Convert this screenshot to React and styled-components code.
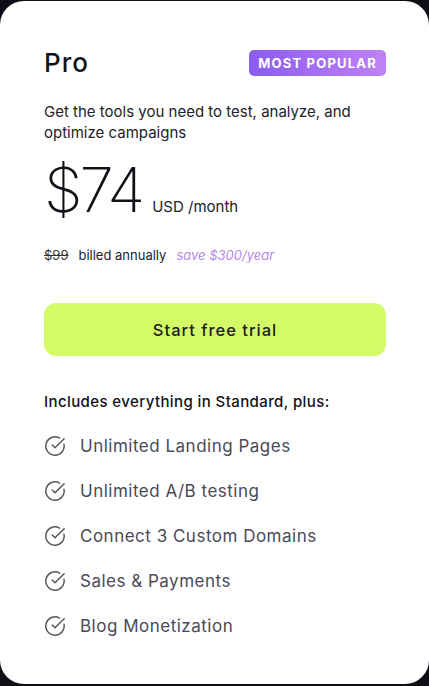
import React from 'react';
import styled, { createGlobalStyle } from 'styled-components';
import { CircleCheckBig } from 'lucide-react';

const Global = createGlobalStyle`
    html, body {
        margin: 0;
        padding: 0;
        background: #0e0e16;
    }
    body {
        font-family: Inter, "Noto Sans", sans-serif;
    }
`;

const Page = styled.div`
    width: 429px;
    height: 686px;
    padding: 1px 0 2px;
    box-sizing: border-box;
    background: #0e0e16;
`;

const Card = styled.div`
    height: 100%;
    box-sizing: border-box;
    background: #ffffff;
    border-radius: 24px;
    padding: 46px 43px 0 44px;
    display: flex;
    flex-direction: column;
`;

const Header = styled.div`
    display: flex;
    justify-content: space-between;
    align-items: center;
`;

const Title = styled.h2`
    margin: 0;
    font-size: 26px;
    font-weight: 500;
    color: #111118;
    letter-spacing: 1px;
`;

const Badge = styled.span`
    padding: 5px 9px;
    border-radius: 5px;
    background: linear-gradient(90deg, #8a5cf0 0%, #c181f5 100%);
    color: #fff;
    font-size: 13px;
    font-weight: 700;
    letter-spacing: 1.2px;
`;

const Desc = styled.p`
    margin: 23px 0 0;
    font-size: 15px;
    line-height: 21px;
    color: #222228;
`;

const PriceRow = styled.div`
    display: flex;
    align-items: baseline;
    gap: 10px;
    margin-top: 8px;
`;

const Amount = styled.span`
    font-size: 62px;
    font-weight: 200;
    color: #111118;
    letter-spacing: -3px;
    line-height: 78px;
`;

const Unit = styled.span`
    font-size: 15px;
    color: #222228;
`;

const Billing = styled.div`
    display: flex;
    align-items: baseline;
    gap: 10px;
    margin-top: 18px;
    font-size: 13px;
    color: #222228;
`;

const Old = styled.span`
    text-decoration: line-through;
    color: #333;
`;

const Save = styled.span`
    font-style: italic;
    color: #b58ae6;
`;

const CTA = styled.button`
    margin-top: 40px;
    height: 53px;
    width: 100%;
    border: none;
    border-radius: 12px;
    background: #d3fc68;
    color: #1d1d22;
    font-family: inherit;
    font-size: 16.5px;
    font-weight: 500;
    letter-spacing: 1px;
`;

const Includes = styled.div`
    margin-top: 36px;
    font-size: 15px;
    font-weight: 500;
    color: #111118;
    letter-spacing: 0.4px;
`;

const List = styled.ul`
    list-style: none;
    margin: 24px 0 0;
    padding: 0;
    display: flex;
    flex-direction: column;
    gap: 23px;
`;

const Item = styled.li`
    display: flex;
    align-items: center;
    gap: 14px;
    height: 22px;
    font-size: 17px;
    color: #4a4a58;
    letter-spacing: 0.5px;
`;

const features = [
    'Unlimited Landing Pages',
    'Unlimited A/B testing',
    'Connect 3 Custom Domains',
    'Sales & Payments',
    'Blog Monetization',
];

export default function App(){
    return(
        <Page>
            <Global />
            <Card>
                <Header>
                    <Title>Pro</Title>
                    <Badge>MOST POPULAR</Badge>
                </Header>
                <Desc>Get the tools you need to test, analyze, and optimize campaigns</Desc>
                <PriceRow>
                    <Amount>$74</Amount>
                    <Unit>USD /month</Unit>
                </PriceRow>
                <Billing>
                    <Old>$99</Old>
                    <span>billed annually</span>
                    <Save>save $300/year</Save>
                </Billing>
                <CTA>Start free trial</CTA>
                <Includes>Includes everything in Standard, plus:</Includes>
                <List>
                    {features.map(f => (
                        <Item key={f}>
                            <CircleCheckBig size={22} strokeWidth={1.6} color="#55555f" />
                            {f}
                        </Item>
                    ))}
                </List>
            </Card>
        </Page>
    );
}
